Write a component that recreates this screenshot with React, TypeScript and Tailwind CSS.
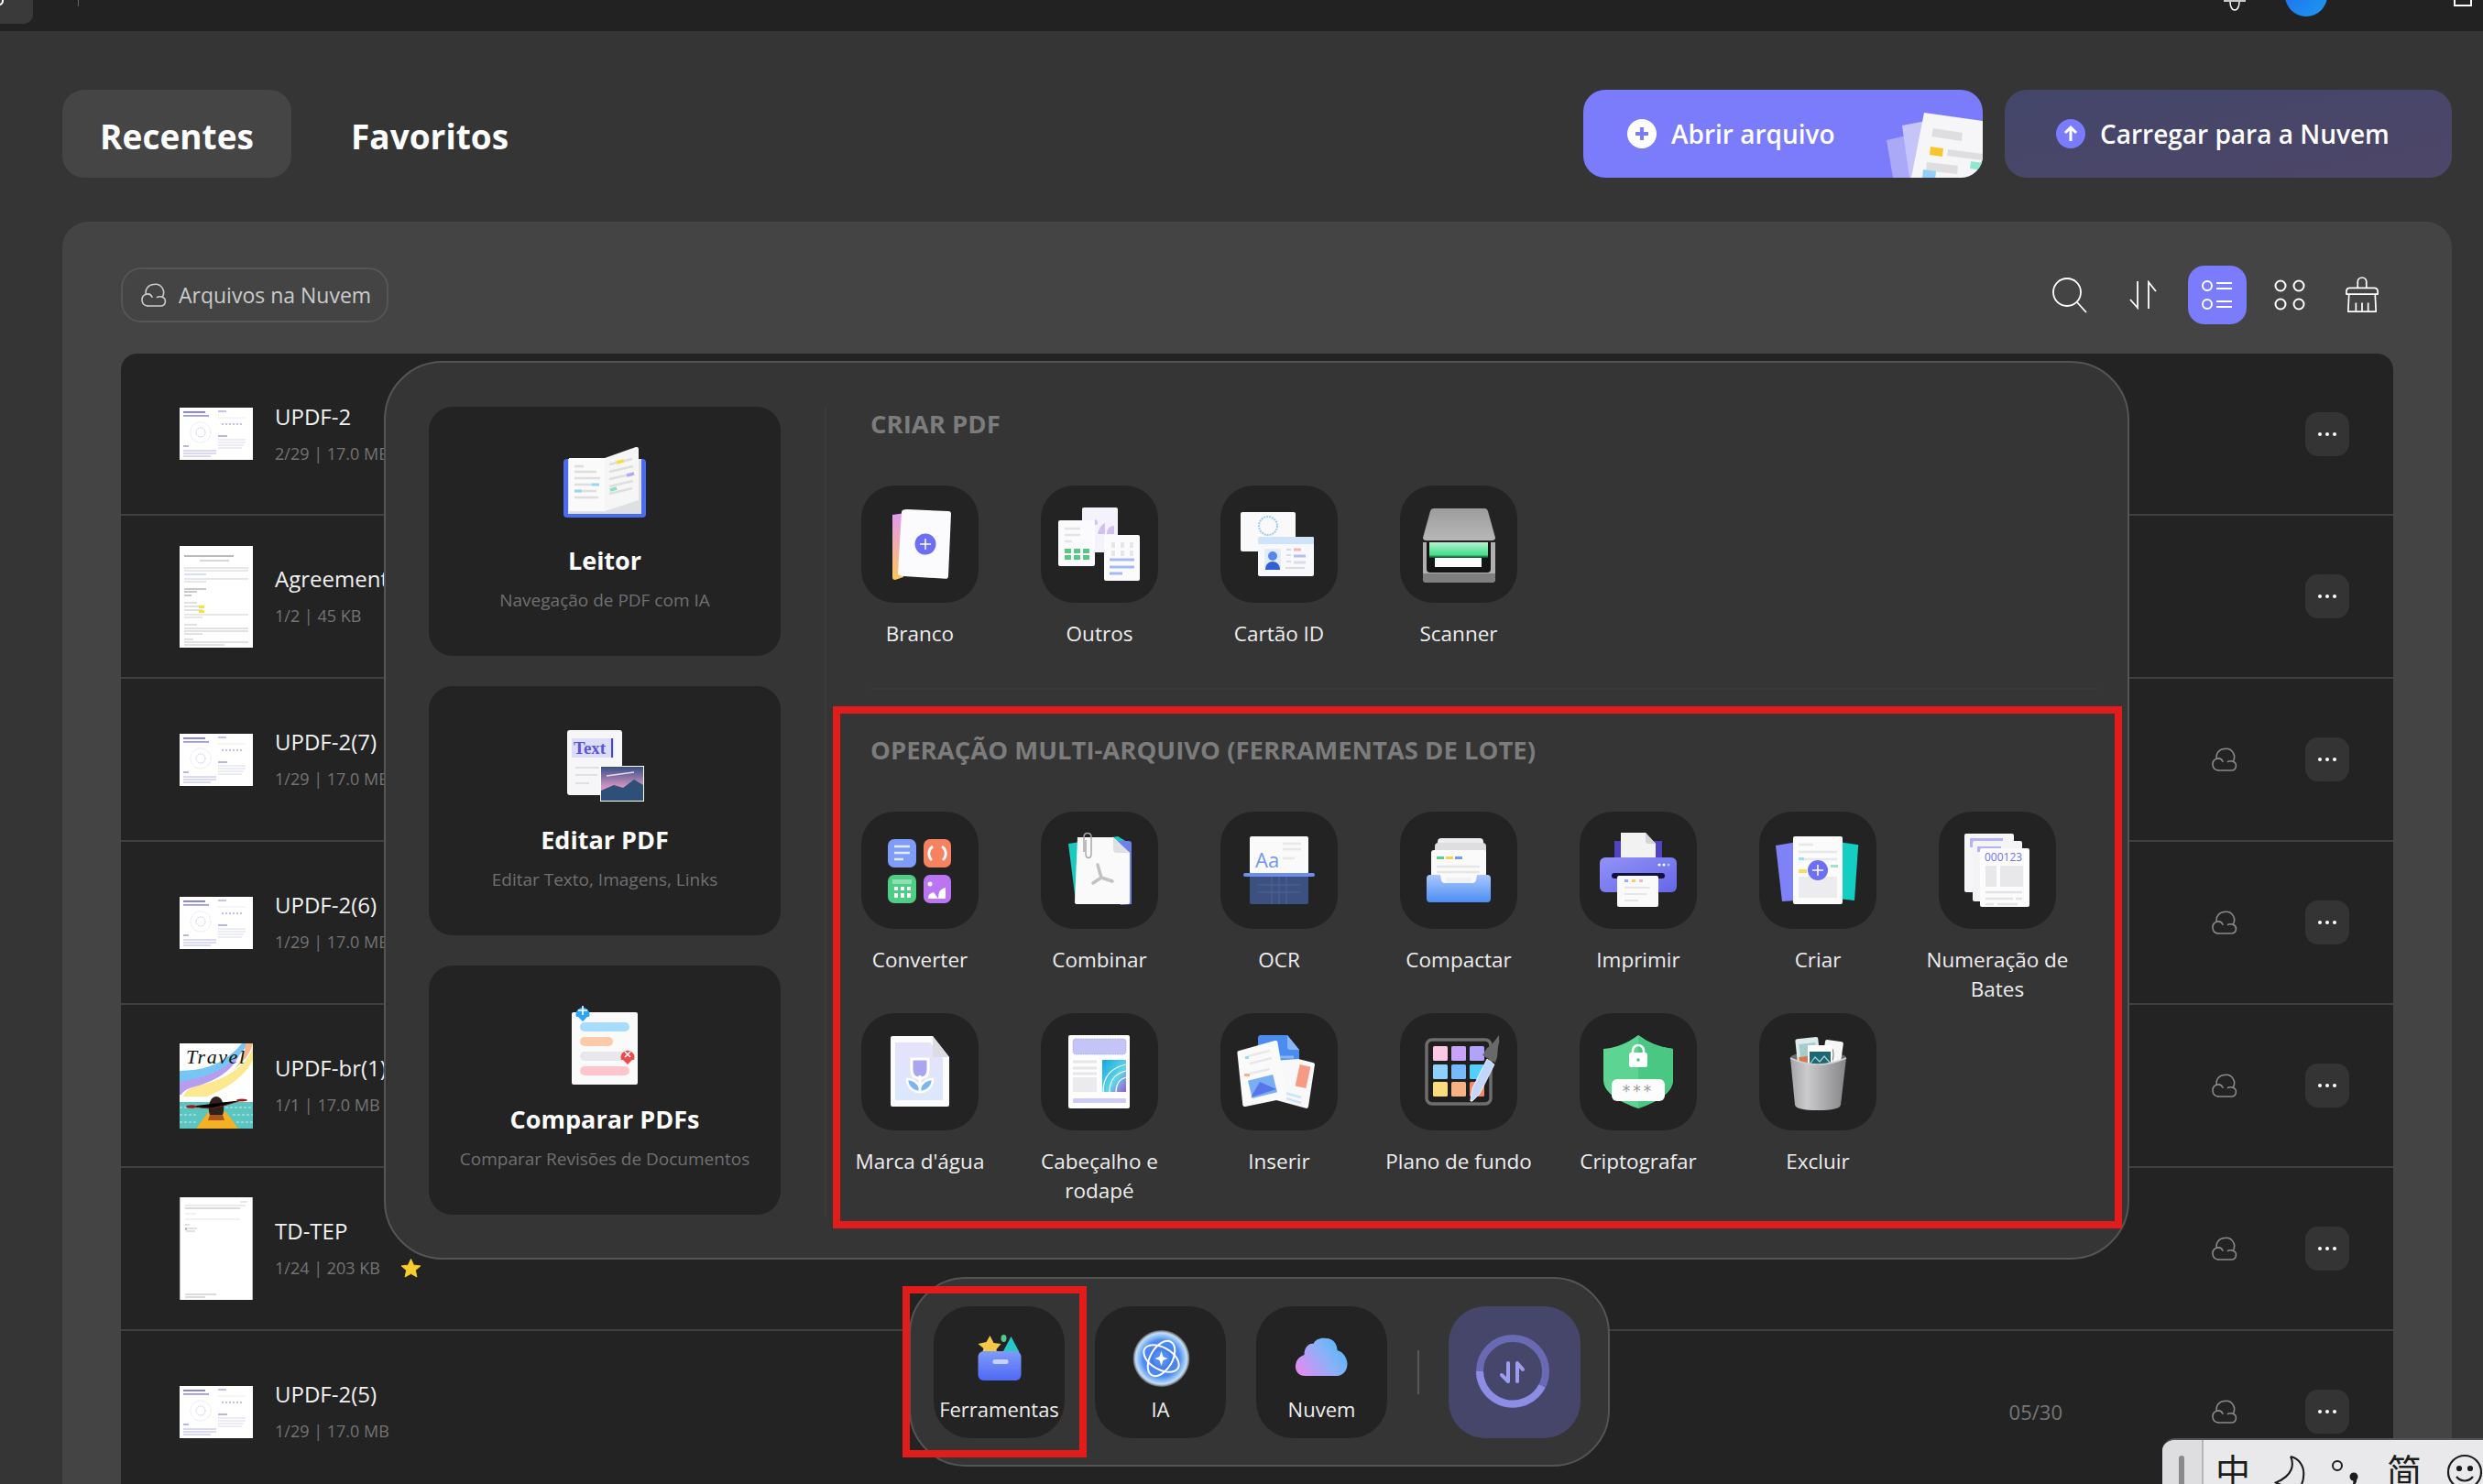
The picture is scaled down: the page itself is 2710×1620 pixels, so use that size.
import React from 'react';

function Cloud({ className }: { className: string }) {
  return (
    <svg viewBox="0 0 28 28" fill="none" stroke="currentColor" strokeWidth="1.6" strokeLinecap="round" strokeLinejoin="round" className={className}>
      <path d="M7 26h14.500a5 5 0 0 0 1.600-9.700A9 9 0 0 0 14 2.500a8.600 8.600 0 0 0-8.600 10.700" />
      <path d="M5.400 13.200A6.600 6.600 0 0 0 7 26" />
      <path d="M5.400 13.200c3-.9 5.500.4 6.600 3" />
      <path d="M17.500 16.500c1.500-.9 3.600-1 5.600-.2" />
    </svg>
  );
}

function Dots() {
  return (
    <div className="w-[48px] h-[48px] rounded-[14px] bg-[#343434] flex items-center justify-center gap-[4px]">
      <span className="w-[4px] h-[4px] rounded-full bg-white" />
      <span className="w-[4px] h-[4px] rounded-full bg-white" />
      <span className="w-[4px] h-[4px] rounded-full bg-white" />
    </div>
  );
}

function SlideThumb() {
  return (
    <svg viewBox="0 0 80 57" className="w-[80px] h-[57px] bg-white">
      <rect x="4" y="4" width="24" height="1.800" fill="#7a78d8" />
      <rect x="4" y="8" width="28" height="1.800" fill="#9c9be6" />
      <circle cx="23" cy="27" r="11" fill="none" stroke="#cfcfe6" strokeWidth="0.800" strokeDasharray="1 1" />
      <circle cx="23" cy="27" r="5" fill="none" stroke="#a8a8c8" strokeWidth="0.800" strokeDasharray="1 1" />
      <rect x="42" y="3" width="9" height="2" fill="#c4c0f0" />
      <path d="M42 11h30" stroke="#e4e4f2" strokeWidth="0.800" />
      <path d="M46 18h24" stroke="#c0c0e8" strokeWidth="2" strokeDasharray="2 2" />
      <rect x="42" y="30" width="10" height="2" fill="#b8b4ee" />
      <path d="M42 35h30M42 38h30M42 41h28M42 44h26" stroke="#cfcfea" strokeWidth="0.800" />
      <rect x="4" y="41" width="6" height="2" fill="#b8b4ee" />
      <path d="M4 47h36M4 50h36M4 53h30" stroke="#aeace6" strokeWidth="0.900" />
    </svg>
  );
}

function AgreementThumb() {
  return (
    <svg viewBox="0 0 80 111" className="w-[80px] h-[111px] bg-white">
      <path d="M5 11h54" stroke="#777" strokeWidth="1.200" />
      <path d="M22 16h32" stroke="#999" strokeWidth="0.800" />
      <path d="M5 24h70M5 27h70" stroke="#bbb" strokeWidth="0.700" />
      <path d="M5 31h24" stroke="#8aa4dc" strokeWidth="0.700" />
      <path d="M5 36h70M5 39h24" stroke="#bbb" strokeWidth="0.700" />
      <path d="M5 47h24M5 50h14M5 54h8" stroke="#888" strokeWidth="0.900" />
      <path d="M5 62h14M5 66h18M5 70h20" stroke="#aaa" strokeWidth="0.700" />
      <rect x="21" y="65" width="6" height="3" fill="#f7e42e" />
      <rect x="21" y="70" width="6" height="3" fill="#f7e42e" />
      <path d="M5 75h70M5 78h20" stroke="#bbb" strokeWidth="0.700" />
      <path d="M5 86h14M5 90h70M5 93h70M5 96h20M5 102h10M5 105h70M5 108h44" stroke="#aaa" strokeWidth="0.700" />
    </svg>
  );
}

function TravelThumb() {
  return (
    <svg viewBox="0 0 80 93" className="w-[80px] h-[93px] bg-white">
      <path d="M80 4C72 30 40 42 20 46C12 48 6 52 4 58L30 58C50 50 72 36 80 18Z" fill="#fbe88f" />
      <path d="M0 40C30 38 52 26 66 10C58 34 30 44 14 48C8 50 4 52 2 56L0 56Z" fill="#b59ef2" />
      <path d="M0 30C28 30 50 22 68 0L74 0C64 22 36 36 0 42Z" fill="#76c5f2" />
      <path d="M72 0H80C76 16 64 24 58 30C68 20 72 8 72 0Z" fill="#f7b58a" />
      <text x="7" y="22" fontFamily="'Liberation Serif',serif" fontStyle="italic" fontSize="22" textLength="64" fill="#111">Travel</text>
      <rect y="64" width="80" height="29" fill="#5cc5c0" />
      <path d="M0 70h24M50 70h30M0 78h20M58 78h22M0 86h18M62 86h18" stroke="#9fe2dc" strokeWidth="1.500" strokeDasharray="3 2" />
      <path d="M18 93l14-19 6 6h6l6-6 14 19z" fill="#f3b123" />
      <path d="M33 78c-3-8 0-20 7-20s10 12 7 20z" fill="#2e201c" />
      <path d="M33 78h14l2 6H31z" fill="#a8541e" />
      <path d="M10 69l24 2 14-3 20-6" stroke="#7a1f1a" strokeWidth="1" />
      <ellipse cx="13" cy="69" rx="6" ry="1.800" fill="#9a1c18" />
      <ellipse cx="68" cy="62" rx="6" ry="1.500" fill="#9a1c18" />
    </svg>
  );
}

function BlankThumb() {
  return (
    <svg viewBox="0 0 80 112" className="w-[80px] h-[112px] bg-white">
      <path d="M6 9h66" stroke="#c4c4c4" strokeWidth="0.700" />
      <path d="M6 12h60" stroke="#888" strokeWidth="0.600" />
      <path d="M66 5h8" stroke="#9fd8c8" strokeWidth="0.800" />
      <path d="M6 18h12M6 24h60" stroke="#ccc" strokeWidth="0.600" />
      <path d="M6 30h5M7 34h12M7 37h10" stroke="#aaa" strokeWidth="0.700" />
      <rect x="6" y="33" width="2" height="3" fill="#bbb" />
      <path d="M6 106h34M6 109h22" stroke="#999" strokeWidth="0.700" />
      <path d="M0.500 0v112M79.500 0v112" stroke="#bbb" strokeWidth="1" />
    </svg>
  );
}

const ROWS: { name: string; meta: string; thumb: React.ReactNode; cloud?: boolean; star?: boolean; date?: string }[] = [
  { name: 'UPDF-2', meta: '2/29 | 17.0 MB', thumb: <SlideThumb /> },
  { name: 'Agreement', meta: '1/2 | 45 KB', thumb: <AgreementThumb /> },
  { name: 'UPDF-2(7)', meta: '1/29 | 17.0 MB', thumb: <SlideThumb />, cloud: true },
  { name: 'UPDF-2(6)', meta: '1/29 | 17.0 MB', thumb: <SlideThumb />, cloud: true },
  { name: 'UPDF-br(1)', meta: '1/1 | 17.0 MB', thumb: <TravelThumb />, cloud: true },
  { name: 'TD-TEP', meta: '1/24 | 203 KB', thumb: <BlankThumb />, cloud: true, star: true },
  { name: 'UPDF-2(5)', meta: '1/29 | 17.0 MB', thumb: <SlideThumb />, cloud: true, date: '05/30' },
];

/* left column icons */
function BookIcon() {
  return (
    <svg viewBox="0 0 120 104" className="w-[120px] h-[104px]">
      <path d="M15 29q0-4 4-4h82q4 0 4 4v56q0 4-4 4H19q-4 0-4-4z" fill="#4a6cf0" />
      <rect x="20" y="25" width="80" height="60" fill="#dfe0e4" />
      <path d="M21 24h40v58H21z" fill="#fafafa" />
      <path d="M60 24l34-12q3-.5 3 2v56L60 82z" fill="#f6f6f6" />
      <path d="M27 33h10M27 39h24M27 46h28M27 53h22M27 60h24M27 67h26" stroke="#dedede" strokeWidth="2.500" />
      <path d="M65 31l25-6M65 39l26-6M65 47l27-6M65 55l26-6M65 63l25-6" stroke="#dedede" strokeWidth="2.500" />
      <path d="M73 29l8-2" stroke="#f6df3c" strokeWidth="3.500" />
      <path d="M84 43l8-2" stroke="#b3a9f5" strokeWidth="3.500" />
      <path d="M66 59l7-2" stroke="#86e2bd" strokeWidth="3.500" />
      <path d="M46 53h8M27 60h8" stroke="#94d8f4" strokeWidth="3" />
    </svg>
  );
}

function EditIcon() {
  return (
    <svg viewBox="0 0 120 104" className="w-[120px] h-[104px]">
      <rect x="19" y="16" width="60" height="71" rx="3" fill="#f6f6f8" />
      <rect x="24" y="25" width="46" height="21" fill="#dcdcfb" />
      <text x="26" y="42" fontFamily="'Liberation Serif',serif" fontSize="19" fontWeight="700" fill="#5a55d6">Text</text>
      <rect x="67" y="25" width="2" height="21" fill="#4b46cc" />
      <path d="M28 57h26M28 65h24M28 74h15" stroke="#e0e0e0" strokeWidth="2" />
      <rect x="55" y="55" width="48" height="39" fill="#fff" />
      <defs>
        <linearGradient id="sky" x1="0" y1="0" x2="0" y2="1">
          <stop offset="0" stopColor="#384f86" />
          <stop offset="0.55" stopColor="#c990bd" />
          <stop offset="1" stopColor="#e9b9c4" />
        </linearGradient>
      </defs>
      <rect x="56" y="56" width="46" height="37" fill="url(#sky)" />
      <path d="M56 82l14-6 10 3 12-9 10 6v17H56z" fill="#2d4f78" />
      <path d="M62 66l30-4" stroke="#e8d9ee" strokeWidth="1.500" />
    </svg>
  );
}

function CompareIcon() {
  return (
    <svg viewBox="0 0 120 104" className="w-[120px] h-[104px]">
      <rect x="24" y="19" width="72" height="79" rx="2" fill="#fafafa" />
      <rect x="33" y="30" width="54" height="10" rx="5" fill="#a8dcfb" />
      <rect x="33" y="46" width="36" height="10" rx="5" fill="#fdc9a8" />
      <rect x="33" y="62" width="50" height="10" rx="5" fill="#e8e8ec" />
      <rect x="33" y="78" width="54" height="10" rx="5" fill="#fdc6cc" />
      <path d="M36 29l-5-5h-2a7.500 7.500 0 1 1 14 0h-2z" fill="#2ea5f2" />
      <path d="M36 12v10M31 17h10" stroke="#fff" strokeWidth="1.600" />
      <path d="M85 76l-5-5h-2a7.500 7.500 0 1 1 14 0h-2z" fill="#ee4b4b" />
      <path d="M82 62l6 6M88 62l-6 6" stroke="#fff" strokeWidth="1.600" />
    </svg>
  );
}

/* tile icons, all drawn on a 128 box */
function Box({ children }: { children: React.ReactNode }) {
  return (
    <svg viewBox="0 0 128 128" className="w-[128px] h-[128px]">
      {children}
    </svg>
  );
}

const BrancoIcon = () => (
  <Box>
    <defs>
      <linearGradient id="bg1" x1="0" y1="0" x2="0" y2="1">
        <stop offset="0" stopColor="#e29af0" />
        <stop offset="1" stopColor="#fdc65c" />
      </linearGradient>
    </defs>
    <path d="M34 32l14-2-2 70-9 3q-3 0-3-3z" fill="url(#bg1)" />
    <path d="M50 26l45 2q3 .2 3 3l-3 68q-.2 3-3 2.800l-46-2.800q-6-1-6-3l4-67q0-3 6-3z" fill="#fbfbfd" />
    <circle cx="70" cy="64" r="11.500" fill="#6c6ef5" />
    <path d="M70 58v12M64 64h12" stroke="#fff" strokeWidth="1.500" />
  </Box>
);

const OutrosIcon = () => (
  <Box>
    <rect x="45" y="24" width="39" height="49" rx="2" fill="#f4f2fb" />
    <path d="M58 40c2-4 2-4 4 0 1 4-5 4-4 0zM62 53c2-10 8-12 8-12v12zM72 53c0-8 6-9 8-9v9z" fill="#d4bff3" />
    <rect x="69" y="54" width="39" height="50" rx="2" fill="#fbfbfd" />
    <path d="M77 62h4v6h-4zM87 62h4v6h-4zM97 62h4v6h-4zM77 71h4v6h-4zM87 71h4v6h-4zM97 71h4v6h-4z" fill="#e7e7ea" />
    <path d="M75 81h27M75 89h27M75 96h14" stroke="#a8b8f3" strokeWidth="3" />
    <rect x="19" y="38" width="40" height="50" rx="2" fill="#fbfbfd" />
    <path d="M26 47h17M26 54h17M26 61h8" stroke="#e4e4e4" strokeWidth="2.500" />
    <path d="M26 69h7v5h-7zM36 69h7v5h-7zM46 69h7v5h-7zM26 76h7v5h-7zM36 76h7v5h-7zM46 76h7v5h-7z" fill="#57c783" />
  </Box>
);

const CartaoIcon = () => (
  <Box>
    <rect x="22" y="29" width="60" height="43" rx="2" fill="#f9f9fb" />
    <circle cx="52" cy="44" r="10" fill="none" stroke="#9ccbe8" strokeWidth="2" strokeDasharray="2 1" />
    <rect x="41" y="56" width="61" height="43" rx="2" fill="#f8f9fd" />
    <path d="M41 58q0-2 2-2h57q2 0 2 2v6H41z" fill="#cfe4fb" />
    <rect x="48" y="69" width="18" height="23" rx="2" fill="#e3ecfd" />
    <circle cx="57" cy="77" r="5" fill="#5588ea" />
    <path d="M49 92c0-6 4-9 8-9s8 3 8 9z" fill="#2f62d0" />
    <path d="M72 70h5" stroke="#ddd" strokeWidth="2" />
    <path d="M80 70h8" stroke="#f6b4b8" strokeWidth="3" />
    <path d="M72 76h5M72 83h5M71 90h21" stroke="#ddd" strokeWidth="2" />
    <path d="M80 77h13" stroke="#b6bff2" strokeWidth="3" />
    <path d="M80 84h13" stroke="#d9dce8" strokeWidth="3" />
  </Box>
);

const ScannerIcon = () => (
  <Box>
    <defs>
      <linearGradient id="glow" x1="0" y1="0" x2="0" y2="1">
        <stop offset="0" stopColor="#b8f0cf" />
        <stop offset="0.8" stopColor="#3fe08c" />
        <stop offset="1" stopColor="#183c2a" />
      </linearGradient>
      <linearGradient id="lid" x1="0" y1="0" x2="0" y2="1">
        <stop offset="0" stopColor="#9c9c9c" />
        <stop offset="1" stopColor="#b8b8b8" />
      </linearGradient>
    </defs>
    <path d="M25 62h79v40q0 4-4 4H29q-4 0-4-4z" fill="#b0b0b0" />
    <path d="M25 96h79v6q0 4-4 4H29q-4 0-4-4z" fill="#7f7f7f" />
    <path d="M29 62h70v29q0 4-4 4H33q-4 0-4-4z" fill="#151515" />
    <rect x="32" y="62" width="64" height="17" fill="url(#glow)" />
    <rect x="38" y="79" width="51" height="10" fill="#fafafa" />
    <path d="M37 25h55q3 0 4 3l8 29q0 3-4 3H29q-4 0-4-3l8-29q1-3 4-3z" fill="url(#lid)" />
  </Box>
);

const ConverterIcon = () => (
  <Box>
    <rect x="29" y="30" width="31" height="31" rx="7" fill="#7f9cf8" />
    <path d="M36 38h17M36 45h17M36 52h10" stroke="#fff" strokeWidth="2.600" opacity="0.8" />
    <rect x="68" y="30" width="30" height="31" rx="7" fill="#f6825f" />
    <path d="M78 38a9.500 9.500 0 0 0-1 15M88 38a9.500 9.500 0 0 1 1 15" stroke="#fff" strokeWidth="2.800" fill="none" />
    <rect x="29" y="69" width="31" height="31" rx="7" fill="#4fcd84" />
    <rect x="34" y="74" width="21" height="5" fill="#8fe0b0" />
    <path d="M36 82h4v4h-4zM43 82h4v4h-4zM50 82h4v4h-4zM36 89h4v5h-4zM43 89h4v5h-4zM50 89h4v5h-4z" fill="#fff" />
    <rect x="68" y="69" width="30" height="31" rx="7" fill="#bb74f2" />
    <circle cx="75" cy="79" r="2.500" fill="#fff" />
    <path d="M73 95q0-6 6-7l5 7zM84 95q0-11 8-12v12z" fill="#fff" />
  </Box>
);

const CombinarIcon = () => (
  <Box>
    <path d="M30 35l54-8 15 9v65H41q-3 0-3-3z" fill="#1cc9bd" />
    <path d="M50 32h46q3 0 3 3v66l-12 1z" fill="#6e80ee" />
    <path d="M40 28h39l18 17v54q0 2-2 2H40q-3 0-3-2z" fill="#fafafb" />
    <path d="M79 28l18 17H83q-4 0-4-3z" fill="#dfe0e4" />
    <path d="M62 58l4 14M66 72l-9 6M66 72l12 4" stroke="#c2c2c2" strokeWidth="3.500" fill="none" strokeLinecap="round" />
    <path d="M47 44V28c0-6 8-6 8 0v18c0 6-6 6-6 0V31" fill="none" stroke="#a8a8a8" strokeWidth="1.500" />
  </Box>
);

const OcrIcon = () => (
  <Box>
    <rect x="32" y="27" width="64" height="41" rx="2" fill="#fafafb" />
    <text x="38" y="61" fontFamily="'Open Sans',sans-serif" fontSize="22" fill="#7096ee">Aa</text>
    <path d="M68 35h20M68 41h20M68 51h13" stroke="#e8e8e8" strokeWidth="2.500" />
    <rect x="32" y="70" width="64" height="31" rx="2" fill="#3d5180" />
    <path d="M56 71v30M64 71v30M72 71v30M40 80h48M40 88h48" stroke="#5e76a8" strokeWidth="1" opacity="0.5" />
    <rect x="25" y="67" width="78" height="4" rx="2" fill="#6d8fea" />
  </Box>
);

const CompactarIcon = () => (
  <Box>
    <defs>
      <linearGradient id="fold" x1="0" y1="0" x2="0" y2="1">
        <stop offset="0" stopColor="#a9c8fb" />
        <stop offset="1" stopColor="#4d8ef5" />
      </linearGradient>
    </defs>
    <path d="M41 33q0-4 4-4h42q4 0 4 4v10H41z" fill="#ececee" />
    <path d="M38 38q0-4 4-4h48q4 0 4 4v10H38z" fill="#dedee0" />
    <rect x="34" y="42" width="60" height="36" rx="3" fill="#fafafb" />
    <rect x="40" y="49" width="8" height="3" fill="#58d28b" />
    <rect x="50" y="49" width="8" height="3" fill="#f6d14e" />
    <rect x="60" y="49" width="8" height="3" fill="#6e9af2" />
    <path d="M40 60h47M40 66h47" stroke="#e6e6e6" strokeWidth="2.500" />
    <path d="M29 73q0-4 4-4h11l1 6q1 3 4 3h30q3 0 4-3l1-6h11q4 0 4 4v22q0 4-4 4H33q-4 0-4-4z" fill="url(#fold)" />
    <path d="M50 72h28v4q0 2-2 2H52q-2 0-2-2z" fill="#f2f2f4" />
  </Box>
);

const ImprimirIcon = () => (
  <Box>
    <defs>
      <linearGradient id="prn" x1="0" y1="0" x2="1" y2="1">
        <stop offset="0" stopColor="#9293f7" />
        <stop offset="1" stopColor="#6566e8" />
      </linearGradient>
    </defs>
    <rect x="38" y="32" width="52" height="20" fill="#5043c0" />
    <path d="M45 23h27l11 12v16H45z" fill="#f2f2f2" />
    <path d="M72 23l11 12h-8q-3 0-3-3z" fill="#d4d4d8" />
    <rect x="22" y="50" width="84" height="38" rx="6" fill="url(#prn)" />
    <circle cx="87" cy="58" r="1.500" fill="#fff" />
    <circle cx="92" cy="58" r="1.500" fill="#fff" />
    <circle cx="97" cy="58" r="1.500" fill="#9fd0ff" />
    <rect x="35" y="67" width="58" height="6" rx="3" fill="#14123a" />
    <rect x="41" y="70" width="45" height="34" rx="2" fill="#fafafb" />
    <rect x="49" y="74" width="4" height="3" fill="#a6a7f5" />
    <rect x="57" y="74" width="4" height="3" fill="#f4d25c" />
    <rect x="65" y="74" width="4" height="3" fill="#f0b7d4" />
    <path d="M49 83h28M49 90h24M49 97h15" stroke="#e6e6e6" strokeWidth="2" />
  </Box>
);

const CriarIcon = () => (
  <Box>
    <path d="M18 37l24-4v64l-17 1z" fill="#7f82f7" />
    <path d="M86 33l21 3q2 0 1 3l-4 58-18-2z" fill="#12cfc2" />
    <rect x="37" y="27" width="54" height="74" rx="2" fill="#fbfbfc" />
    <path d="M43 36h16M43 44h42M43 52h42" stroke="#e8e8e8" strokeWidth="2.500" />
    <rect x="43" y="50" width="6" height="3" fill="#9be0f5" />
    <rect x="78" y="58" width="8" height="3" fill="#9be6c8" />
    <rect x="43" y="63" width="9" height="4" fill="#f8de5a" />
    <rect x="43" y="71" width="42" height="23" fill="#ececee" />
    <circle cx="64" cy="64" r="11" fill="#6d70f6" />
    <path d="M64 58v12M58 64h12" stroke="#fff" strokeWidth="1.500" />
  </Box>
);

const BatesIcon = () => (
  <Box>
    <rect x="28" y="24" width="54" height="64" rx="2" fill="#f6f6f8" />
    <rect x="34" y="29" width="36" height="10" fill="#b5b3f0" />
    <rect x="37" y="32" width="54" height="66" rx="2" fill="#f4f4f6" />
    <rect x="42" y="38" width="26" height="6" fill="#b5b3f0" />
    <rect x="45" y="40" width="54" height="64" rx="2" fill="#fcfcfd" />
    <text x="50" y="54" fontFamily="'Open Sans',sans-serif" fontSize="12" fontWeight="500" fill="#6f6ff0">000123</text>
    <rect x="51" y="59" width="12" height="23" fill="#e8e8ea" />
    <rect x="67" y="59" width="25" height="23" fill="#e8e8ea" />
    <path d="M51 88h40M51 95h30M84 95h7M51 101h9M64 101h22" stroke="#e4e4e6" strokeWidth="2.500" />
  </Box>
);

const MarcaIcon = () => (
  <Box>
    <defs>
      <linearGradient id="wm" x1="0" y1="0" x2="0" y2="1">
        <stop offset="0" stopColor="#e6e2fc" />
        <stop offset="1" stopColor="#dbe8fd" />
      </linearGradient>
    </defs>
    <path d="M32 27q0-2 2-2h44l18 23v52q0 2-2 2H34q-2 0-2-2z" fill="#fcfcfd" />
    <path d="M37 32h38l14 17v46H37z" fill="url(#wm)" />
    <path d="M78 25l18 23H81q-3 0-3-3z" fill="#dcdce2" />
    <path d="M55 50h18v12q0 9-9 9t-9-9z" fill="#a9a6ef" stroke="#fff" strokeWidth="3" />
    <path d="M64 86c-8 0-14-6-14-14 6 0 11 3 14 9 3-6 8-9 14-9 0 8-6 14-14 14z" fill="#7cb6f3" stroke="#fff" strokeWidth="2.500" />
    <path d="M64 68v18" stroke="#fff" strokeWidth="3" />
  </Box>
);

const CabecalhoIcon = () => (
  <Box>
    <defs>
      <linearGradient id="wav" x1="0" y1="0" x2="1" y2="1">
        <stop offset="0" stopColor="#14a7e0" />
        <stop offset="0.6" stopColor="#5fd6e8" />
        <stop offset="1" stopColor="#a052d8" />
      </linearGradient>
    </defs>
    <rect x="30" y="24" width="67" height="80" rx="2" fill="#fdfdfe" />
    <rect x="35" y="28" width="58" height="17" rx="3" fill="#c5c4f6" stroke="#9c9ae8" strokeWidth="0.600" strokeDasharray="1.500 1" />
    <path d="M35 53h26M35 60h26M35 66h26" stroke="#e6e6e8" strokeWidth="3" />
    <rect x="35" y="70" width="26" height="16" fill="#ebebed" />
    <rect x="67" y="51" width="26" height="35" fill="url(#wav)" />
    <path d="M68 86c0-14 6-26 25-30M75 86c0-12 5-20 18-23M82 86c0-8 4-14 11-16" stroke="#fff" strokeWidth="1.200" fill="none" />
    <rect x="35" y="93" width="58" height="5" rx="1" fill="#cdccf6" />
  </Box>
);

const InserirIcon = () => (
  <Box>
    <path d="M41 27q0-3 3-3h29l13 16v44H41z" fill="#4b8cf0" />
    <path d="M73 24l13 16h-10q-3 0-3-3z" fill="#8ab6f6" />
    <path d="M54 48h26M54 54h26M54 60h26M54 66h26M54 72h20" stroke="#8ab4f4" strokeWidth="2.800" />
    <rect x="50" y="37" width="9" height="3" fill="#8ab4f4" />
    <path d="M85 50l16 4q2 .5 2 2l-7 46q-.5 2-2 2l-44-12 6-40z" fill="#f8f8fa" />
    <rect x="84" y="57" width="12" height="24" fill="#f59a85" transform="rotate(12 90 69)" />
    <path d="M70 87l18 5M72 93l16 5" stroke="#cfe2f8" strokeWidth="2.500" />
    <path d="M18 43l39-14q2-.5 3 1l14 58q.5 2-1 3l-43 12q-2 .5-3-1L17 45q0-2 1-2z" fill="#fafafb" transform="rotate(4 44 64)" />
    <path d="M30 47l24-6M32 55l24-6M32 66l22-5" stroke="#e8e8e8" strokeWidth="2.500" />
    <rect x="26" y="66" width="6" height="3" fill="#f6b088" />
    <rect x="27" y="47" width="4" height="3" fill="#9ad8f4" />
    <rect x="32" y="70" width="28" height="20" fill="#7aaef2" transform="rotate(-14 46 80)" />
    <path d="M33 92l10-17 18 8z" fill="#4a5ee8" opacity="0.7" />
  </Box>
);

const PlanoIcon = () => (
  <Box>
    <rect x="29" y="29" width="70" height="70" rx="6" fill="#1f1f1f" stroke="#6e6e6e" strokeWidth="3.500" />
    <rect x="36" y="36" width="16" height="16" rx="1.500" fill="#fbc9e4" />
    <rect x="56" y="36" width="16" height="16" rx="1.500" fill="#c9a3f7" />
    <rect x="76" y="36" width="16" height="16" rx="1.500" fill="#b0a4fa" />
    <rect x="36" y="56" width="16" height="16" rx="1.500" fill="#8fd0ff" />
    <rect x="56" y="56" width="16" height="16" rx="1.500" fill="#74bafc" />
    <rect x="76" y="56" width="16" height="16" rx="1.500" fill="#52cffc" />
    <rect x="36" y="75" width="16" height="16" rx="1.500" fill="#fbdc7c" />
    <rect x="56" y="75" width="16" height="16" rx="1.500" fill="#f9b183" />
    <rect x="76" y="75" width="16" height="16" rx="1.500" fill="#f08a68" />
    <path d="M95 50l8 6-16 32-8 8q-3 1-2-2l2-12z" fill="#c2d5fb" stroke="#fff" strokeWidth="0.800" />
    <path d="M95 38q4-2 7-6l6-8q1 7-1 13l-1 11-2 6-14-8z" fill="#696969" />
  </Box>
);

const CriptoIcon = () => (
  <Box>
    <path d="M64 24q17 13 38 15v34q0 18-38 31-38-13-38-31V39q21-2 38-15z" fill="#5ed492" />
    <path d="M64 24q17 13 38 15v34q0 18-38 31z" fill="#4bc784" />
    <rect x="54" y="43" width="20" height="16" rx="2.500" fill="#fff" />
    <path d="M58 44v-3a6 6 0 0 1 12 0v3" stroke="#fff" strokeWidth="2.600" fill="none" />
    <circle cx="64" cy="51" r="1.800" fill="#4bc784" />
    <rect x="35" y="72" width="58" height="24" rx="6" fill="#fcfcfc" />
    <text x="64" y="91" textAnchor="middle" fontFamily="'DejaVu Sans',sans-serif" fontSize="17" letterSpacing="3" fill="#9a9a9a">***</text>
  </Box>
);

const ExcluirIcon = () => (
  <Box>
    <defs>
      <linearGradient id="bin" x1="0" y1="0" x2="1" y2="0">
        <stop offset="0" stopColor="#a4a4a6" />
        <stop offset="0.3" stopColor="#cbcbcd" />
        <stop offset="1" stopColor="#858587" />
      </linearGradient>
    </defs>
    <ellipse cx="64.500" cy="49" rx="30.500" ry="7" fill="#6e6e70" />
    <rect x="41" y="27" width="25" height="36" rx="2" fill="#dfeaea" transform="rotate(-6 53 45)" />
    <rect x="44" y="33" width="18" height="14" fill="#a5cdd0" transform="rotate(-6 53 40)" />
    <rect x="44" y="47" width="18" height="15" fill="#d67a4e" transform="rotate(-6 53 55)" />
    <rect x="70" y="30" width="20" height="32" rx="2" fill="#f6f6f6" transform="rotate(8 80 46)" />
    <path d="M78 36c4 4 4 14 0 20" stroke="#333" strokeWidth="0.700" fill="none" />
    <rect x="53" y="35" width="27" height="28" fill="#fff" />
    <rect x="55" y="42" width="23" height="21" fill="#1d6870" />
    <path d="M55 56l6-8 5 5 5-6 7 8" stroke="#a9d3d8" strokeWidth="1.200" fill="none" />
    <path d="M34 49q30 14 61 0l-6 51q-1 6-25 6t-25-6z" fill="url(#bin)" />
    <path d="M34 49q30 14 61 0" stroke="#d0d0d2" strokeWidth="1.500" fill="none" />
  </Box>
);

function Tile({ icon, label }: { icon: React.ReactNode; label: string }) {
  return (
    <div className="flex flex-col items-center">
      <div className="w-[128px] h-[128px] rounded-[36px] bg-[#232324]">{icon}</div>
      <div className="mt-[18px] w-[172px] text-center text-[22.5px] leading-[32px] text-[#eeeeee]">{label}</div>
    </div>
  );
}

function LeftCard({ icon, title, sub }: { icon: React.ReactNode; title: string; sub: string }) {
  return (
    <div className="w-[384px] h-[272px] rounded-[26px] bg-[#232324] flex flex-col items-center pt-[32px]">
      {icon}
      <div className="mt-[12px] h-[40px] text-[27px] leading-[40px] font-bold text-white">{title}</div>
      <div className="mt-[9px] text-[19px] leading-[28px] text-[#707070]">{sub}</div>
    </div>
  );
}

function DockTile({ icon, label }: { icon: React.ReactNode; label: string }) {
  return (
    <div className="w-[143px] h-[144px] rounded-[40px] bg-[#232324] flex flex-col items-center">
      {icon}
      <div className="mt-[-1px] text-[22px] leading-[34px] text-[#eeeeee]">{label}</div>
    </div>
  );
}

const ToolsIcon = () => (
  <svg viewBox="0 0 142 96" className="w-[143px] h-[96px]">
    <defs>
      <linearGradient id="tb" x1="0" y1="0" x2="0" y2="1">
        <stop offset="0" stopColor="#7f9cf8" />
        <stop offset="1" stopColor="#4f68f6" />
      </linearGradient>
    </defs>
    <path d="M61 32l4 8 8 1-5 6 1 6-8-2-9 2 2-7-6-5 9-2z" fill="#f5c84a" />
    <path d="M84 33l9 17H75z" fill="#27c8c8" />
    <ellipse cx="76" cy="35" rx="3" ry="4" fill="#55c98b" />
    <rect x="48" y="49" width="47" height="32" rx="6" fill="url(#tb)" />
    <rect x="64" y="58" width="17" height="5" rx="2" fill="#c8d2fb" />
  </svg>
);

const AiIcon = () => (
  <svg viewBox="0 0 142 96" className="w-[143px] h-[96px]">
    <defs>
      <radialGradient id="ai" cx="0.5" cy="0.5" r="0.5">
        <stop offset="0" stopColor="#3b6cf0" />
        <stop offset="0.65" stopColor="#4f8df0" />
        <stop offset="0.9" stopColor="#bfe0fb" />
        <stop offset="1" stopColor="#ffffff" stopOpacity="0.2" />
      </radialGradient>
    </defs>
    <circle cx="72" cy="57" r="31" fill="url(#ai)" />
    <g fill="none" stroke="#fff" strokeWidth="2">
      <ellipse cx="72" cy="57" rx="21" ry="12" transform="rotate(30 72 57)" />
      <ellipse cx="72" cy="57" rx="21" ry="12" transform="rotate(-60 72 57)" />
    </g>
    <circle cx="72" cy="57" r="9" fill="#4f8df0" />
    <path d="M72 49l2 6 5 2-5 2-2 6-2-6-5-2 5-2z" fill="#fff" />
  </svg>
);

const CloudColorIcon = () => (
  <svg viewBox="0 0 142 96" className="w-[143px] h-[96px]">
    <defs>
      <linearGradient id="cc" x1="0" y1="0.8" x2="1" y2="0.3">
        <stop offset="0" stopColor="#e48af0" />
        <stop offset="0.55" stopColor="#8fb0f8" />
        <stop offset="1" stopColor="#52b8fa" />
      </linearGradient>
    </defs>
    <path d="M53 76C44 76 41 68 43 62C44 57 49 54 52 53C52 45 57 40 62 41C64 36 70 34 76 35C84 35 88 42 88 48C95 50 99 57 99 63C99 71 93 76 88 76Z" fill="url(#cc)" />
  </svg>
);

export default function App() {
  return (
    <div className="relative w-[2710px] h-[1620px] overflow-hidden bg-[#353535] text-white font-['Open_Sans',sans-serif]">
      {/* window bar, only its lower edge is in frame */}
      <header className="relative h-[34px] bg-[#222222] overflow-hidden">
        <div className="absolute left-0 top-0 w-[36px] h-[26px] rounded-br-[10px] bg-[#3a3a3a]">
          <div className="absolute left-[-8px] top-[-8px] w-[12px] h-[14px] rounded-[5px] border-2 border-white" />
        </div>
        <div className="absolute left-[85px] top-0 w-[1px] h-[7px] bg-[#666666]" />
        <svg viewBox="0 0 24 12" className="absolute left-[2427px] top-0 w-[24px] h-[12px]" fill="none" stroke="#fff" strokeWidth="1.500">
          <path d="M0 1h24M7 2c0 12 10 12 10 0" />
        </svg>
        <div className="absolute left-[2494px] top-[-28px] w-[46px] h-[46px] rounded-full bg-gradient-to-br from-[#2563eb] to-[#1d9bf0]" />
        <div className="absolute left-[2678px] top-[-6px] w-[20px] h-[13px] border-2 border-white" />
      </header>

      <main className="pl-[68px] pr-[34px] pt-[64px]">
        <div className="flex items-center justify-between h-[96px]">
          <div className="flex items-center gap-[25px]">
            <div className="h-[96px] w-[250px] pt-[6px] rounded-[24px] bg-[#454545] flex items-center justify-center text-[37px] font-bold">Recentes</div>
            <div className="px-[40px] pt-[6px] text-[37px] font-bold">Favoritos</div>
          </div>
          <div className="flex items-center gap-[24px]">
            <div className="relative w-[436px] h-[96px] rounded-[24px] bg-[#7a7cfb] overflow-hidden flex items-center pl-[48px] gap-[16px]">
              <svg viewBox="0 0 32 32" className="w-[32px] h-[32px]">
                <circle cx="16" cy="16" r="16" fill="#fff" />
                <path d="M16 9v14M9 16h14" stroke="#7a7cfb" strokeWidth="4" />
              </svg>
              <span className="text-[28px] font-semibold">Abrir arquivo</span>
              <svg viewBox="0 0 110 72" className="absolute right-0 bottom-0 w-[110px] h-[72px]">
                <path d="M5 31l26-6 6 47H12z" fill="#a9a9f8" />
                <path d="M22 15l26-5 4 62H30z" fill="#c5c5fa" />
                <path d="M46 1l64 9v62H32z" fill="#f6f6f8" />
                <path d="M56 18l32 5-1 9-33-5z" fill="#dedee0" />
                <path d="M53 38l14 2-1 9-14-2z" fill="#f7c62f" />
                <path d="M72 41l38 5v7l-39-5z" fill="#dedee0" />
                <path d="M49 55l34 4-1 9-34-4z" fill="#dedee0" />
                <path d="M97 54l13 2v8l-14-2z" fill="#90e8cf" />
                <path d="M45 63l14 2-1 8H44z" fill="#94cff7" />
              </svg>
            </div>
            <div className="w-[488px] h-[96px] rounded-[24px] bg-gradient-to-br from-[#43466a] to-[#4d4668] flex items-center pl-[56px] gap-[16px]">
              <svg viewBox="0 0 32 32" className="w-[32px] h-[32px]">
                <circle cx="16" cy="16" r="16" fill="#7a7cfb" />
                <path d="M16 24V10M10 15l6-6 6 6" stroke="#fff" strokeWidth="3" fill="none" />
              </svg>
              <span className="text-[28px] font-semibold">Carregar para a Nuvem</span>
            </div>
          </div>
        </div>

        <section className="mt-[48px] rounded-t-[28px] bg-[#444444] px-[64px] pt-[50px]">
          <div className="flex items-center justify-between h-[60px]">
            <div className="h-[60px] w-[292px] rounded-[22px] border-2 border-[#565656] flex items-center pl-[20px] gap-[13px] text-[23px] text-[#cccccc]">
              <Cloud className="w-[28px] h-[28px]" />
              <span>Arquivos na Nuvem</span>
            </div>
            <div className="flex items-center pr-[15px]">
              <svg viewBox="0 0 40 40" className="w-[40px] h-[40px]" fill="none" stroke="#fff" strokeWidth="1.800">
                <circle cx="18" cy="17" r="15" />
                <path d="M29 28l10 11" />
              </svg>
              <svg viewBox="0 0 32 32" className="ml-[45px] w-[32px] h-[32px]" fill="none" stroke="#fff" strokeWidth="1.800">
                <path d="M10 1v29l-8-9M22 31V2l8 10" />
              </svg>
              <div className="ml-[33px] w-[64px] h-[64px] rounded-[18px] bg-[#7a7cfb]">
                <svg viewBox="0 0 64 64" className="w-[64px] h-[64px]" fill="none" stroke="#fff" strokeWidth="2">
                  <circle cx="21" cy="22" r="5" />
                  <circle cx="21" cy="42" r="5" />
                  <path d="M31 19h17M31 25h17M31 39h17M31 45h17" />
                </svg>
              </div>
              <svg viewBox="0 0 36 36" className="ml-[29px] w-[36px] h-[36px]" fill="none" stroke="#fff" strokeWidth="2">
                <circle cx="8" cy="8" r="5.500" />
                <circle cx="28" cy="8" r="5.500" />
                <circle cx="8" cy="28" r="5.500" />
                <circle cx="28" cy="28" r="5.500" />
              </svg>
              <svg viewBox="0 0 40 40" className="ml-[42px] w-[38px] h-[40px]" fill="none" stroke="#fff" strokeWidth="1.800" strokeLinejoin="round">
                <path d="M15 12V5a5 5 0 0 1 10 0v7" />
                <path d="M2 16q0-4 4-4h28q4 0 4 4v3H2z" />
                <path d="M5 19L4 39h32l-1-20" />
                <path d="M13 39V29M20 39V29M27 39V29" />
              </svg>
            </div>
          </div>

          <div className="mt-[34px] rounded-t-[18px] bg-[#232324]">
            {ROWS.map((row) => (
              <div key={row.name} className="h-[178px] first:h-[177px] border-b-2 border-[#3f3f3f] flex items-center pl-[64px] pr-[48px]">
                {row.thumb}
                <div className="ml-[24px] pt-[2px]">
                  <div className="text-[24px] leading-[32px] font-medium text-[#f2f2f2]">{row.name}</div>
                  <div className="mt-[8px] flex items-center gap-[22px] text-[18px] leading-[32px] text-[#747474]">
                    <span>{row.meta}</span>
                    {row.star && (
                      <svg viewBox="0 0 24 24" className="w-[23px] h-[23px]">
                        <path d="M12 1.500l3.200 7 7.600.8-5.700 5.100 1.600 7.500L12 18.100 5.300 21.900l1.600-7.500L1.200 9.300l7.600-.8z" fill="#f7cf2a" stroke="#f7cf2a" strokeLinejoin="round" />
                      </svg>
                    )}
                  </div>
                </div>
                <div className="ml-auto flex items-center">
                  {row.date && <span className="mr-[163px] text-[22px] text-[#777777]">{row.date}</span>}
                  {row.cloud && <Cloud className="mr-[74px] w-[28px] h-[28px] text-[#8a8a8a]" />}
                  <Dots />
                </div>
              </div>
            ))}
          </div>
        </section>
      </main>

      {/* tools menu over the file list */}
      <div className="absolute left-[419px] top-[394px] w-[1905px] h-[981px] rounded-[64px] border-2 border-[#555555] bg-[#353536] flex pl-[47px] pt-[48px]">
        <div className="flex flex-col gap-[33px]">
          <LeftCard icon={<BookIcon />} title="Leitor" sub="Navegação de PDF com IA" />
          <LeftCard icon={<EditIcon />} title="Editar PDF" sub="Editar Texto, Imagens, Links" />
          <LeftCard icon={<CompareIcon />} title="Comparar PDFs" sub="Comparar Revisões de Documentos" />
        </div>
        <div className="ml-[48px] w-[2px] h-[884px] bg-[#3b3b3b]" />
        <div className="pl-[4px]">
          <div className="mt-[-1px] pl-[44px] h-[40px] text-[27.5px] leading-[40px] font-bold text-[#7c7c7c]">CRIAR PDF</div>
          <div className="mt-[47px] grid grid-cols-[repeat(7,196px)]">
            <Tile icon={<BrancoIcon />} label="Branco" />
            <Tile icon={<OutrosIcon />} label="Outros" />
            <Tile icon={<CartaoIcon />} label="Cartão ID" />
            <Tile icon={<ScannerIcon />} label="Scanner" />
          </div>
          <div className="mt-[43px] ml-[44px] h-[2px] w-[1340px] bg-[#3b3b3b]" />
          <div className="mt-[46px] pl-[44px] h-[40px] text-[27.5px] leading-[40px] font-bold text-[#7c7c7c]">OPERAÇÃO MULTI-ARQUIVO (FERRAMENTAS DE LOTE)</div>
          <div className="mt-[47px] grid grid-cols-[repeat(7,196px)] gap-y-[10px]">
            <Tile icon={<ConverterIcon />} label="Converter" />
            <Tile icon={<CombinarIcon />} label="Combinar" />
            <Tile icon={<OcrIcon />} label="OCR" />
            <Tile icon={<CompactarIcon />} label="Compactar" />
            <Tile icon={<ImprimirIcon />} label="Imprimir" />
            <Tile icon={<CriarIcon />} label="Criar" />
            <Tile icon={<BatesIcon />} label="Numeração de Bates" />
            <Tile icon={<MarcaIcon />} label="Marca d'água" />
            <Tile icon={<CabecalhoIcon />} label="Cabeçalho e rodapé" />
            <Tile icon={<InserirIcon />} label="Inserir" />
            <Tile icon={<PlanoIcon />} label="Plano de fundo" />
            <Tile icon={<CriptoIcon />} label="Criptografar" />
            <Tile icon={<ExcluirIcon />} label="Excluir" />
          </div>
        </div>
      </div>

      {/* dock */}
      <div className="absolute left-[992px] top-[1394px] w-[765px] h-[207px] rounded-[62px] border-2 border-[#555555] bg-[#353536] flex items-center pl-[25px]">
        <div className="flex items-center gap-[33px]">
          <DockTile icon={<ToolsIcon />} label="Ferramentas" />
          <DockTile icon={<AiIcon />} label="IA" />
          <DockTile icon={<CloudColorIcon />} label="Nuvem" />
        </div>
        <div className="ml-[33px] w-[2px] h-[48px] bg-[#585858]" />
        <div className="ml-[32px] w-[144px] h-[144px] rounded-[40px] bg-[#45466a] flex items-center justify-center">
          <svg viewBox="0 0 100 100" className="w-[100px] h-[100px]" fill="none">
            <circle cx="48" cy="49" r="36" stroke="#6a6ab4" strokeWidth="8" />
            <path d="M12 49A36 36 0 0 0 80 65" stroke="#8d8de6" strokeWidth="8" />
            <path d="M43 40v20l-7-7M53 60V40l6 7" stroke="#9d9df0" strokeWidth="4" strokeLinecap="round" strokeLinejoin="round" />
          </svg>
        </div>
      </div>

      {/* red annotation boxes */}
      <div className="absolute left-[909px] top-[771px] w-[1407px] h-[570px] border-8 border-[#e21b1b]" />
      <div className="absolute left-[985px] top-[1404px] w-[201px] h-[187px] border-8 border-[#e21b1b]" />

      {/* input method bar */}
      <div className="absolute left-[2360px] top-[1570px] right-0 bottom-0 rounded-tl-[14px] border-t-2 border-[#555555] bg-[#e9e9eb] flex text-[#1c1c1c] overflow-hidden font-['Noto_Sans_CJK_SC',sans-serif]">
        <div className="w-[47px] border-r-2 border-[#b5b5b5] bg-[#dedee0] flex justify-center pt-[17px]">
          <div className="w-[6px] h-[40px] rounded-full bg-[#8a8a8a]" />
        </div>
        <div className="flex items-start pl-[13px] text-[38px] leading-[50px] pt-[7px] gap-[27px]">
          <span>中</span>
          <svg viewBox="0 0 40 40" className="mt-[8px] ml-[-1px] w-[38px] h-[40px]" fill="none" stroke="#1c1c1c" strokeWidth="2.200">
            <path d="M19 2c9 2 15 10 15 20 0 6-2 12-4 16M19 2c4 9 3 22-17 30 4 3 12 4 20 6" />
          </svg>
          <svg viewBox="0 0 32 40" className="mt-[14px] ml-[-3px] w-[32px] h-[40px]">
            <circle cx="7" cy="7" r="5" fill="none" stroke="#1c1c1c" strokeWidth="2" />
            <circle cx="25" cy="19" r="4.500" fill="#1c1c1c" />
            <path d="M28 20c1 5-2 9-6 11 2-3 3-6 2-9z" fill="#1c1c1c" />
          </svg>
          <span className="ml-[2px]">简</span>
          <svg viewBox="0 0 40 40" className="mt-[8px] w-[40px] h-[40px]" fill="none" stroke="#1c1c1c" strokeWidth="2.200">
            <circle cx="20" cy="20" r="18" />
            <circle cx="14" cy="16" r="2" fill="#1c1c1c" />
            <circle cx="26" cy="16" r="2" fill="#1c1c1c" />
            <path d="M11 25c5 6 13 6 18 0" />
          </svg>
        </div>
      </div>
    </div>
  );
}
